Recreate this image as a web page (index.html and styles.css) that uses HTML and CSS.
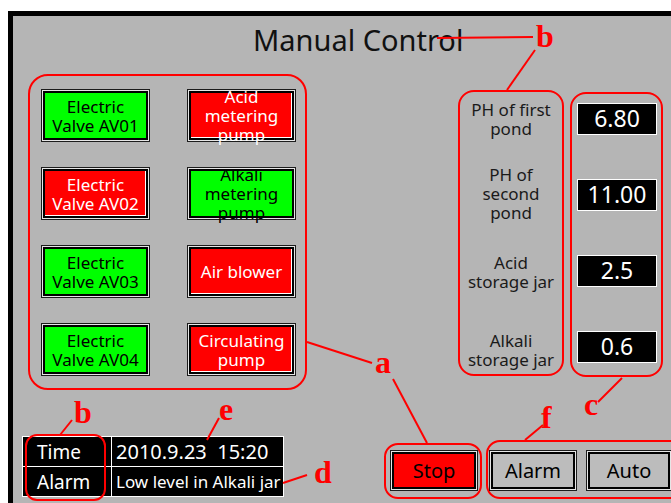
FILE: index.html
```html
<!DOCTYPE html>
<html lang="en">

<head>
    <meta charset="UTF-8">
    <meta name="viewport" content="width=device-width, initial-scale=1.0">
    <title>Manual Control</title>
    <link rel="stylesheet" href="styles.css">
</head>

<body>

    <div class="screen">
        <h1 class="title">Manual Control</h1>

        <div class="main">
            <div class="group-a">
                <div class="btn on"><div class="face">Electric<br>Valve AV01</div></div>
                <div class="btn off"><div class="face">Acid<br>metering<br>pump</div></div>
                <div class="btn off"><div class="face">Electric<br>Valve AV02</div></div>
                <div class="btn on"><div class="face">Alkali<br>metering<br>pump</div></div>
                <div class="btn on"><div class="face">Electric<br>Valve AV03</div></div>
                <div class="btn off"><div class="face">Air blower</div></div>
                <div class="btn on"><div class="face">Electric<br>Valve AV04</div></div>
                <div class="btn off"><div class="face">Circulating<br>pump</div></div>
            </div>

            <div class="labels">
                <div class="label first">PH of first<br>pond</div>
                <div class="label second">PH of<br>second<br>pond</div>
                <div class="label third">Acid<br>storage jar</div>
                <div class="label fourth">Alkali<br>storage jar</div>
            </div>

            <div class="values">
                <div class="value">6.80</div>
                <div class="value">11.00</div>
                <div class="value">2.5</div>
                <div class="value">0.6</div>
            </div>
        </div>

        <div class="bottom">
            <table class="status">
                <tr>
                    <td class="head">Time</td>
                    <td class="clock">2010.9.23&nbsp;&nbsp;15:20</td>
                </tr>
                <tr>
                    <td class="head">Alarm</td>
                    <td class="msg"><div class="msg-text">Low level in Alkali jar</div></td>
                </tr>
            </table>

            <div class="stop-group">
                <div class="btn small stop"><div class="face">Stop</div></div>
            </div>

            <div class="mode-group">
                <div class="btn small mode"><div class="face">Alarm</div></div>
                <div class="btn small mode auto"><div class="face">Auto</div></div>
            </div>
        </div>
    </div>

    <!-- annotation marks drawn over the screen -->
    <svg class="notes" width="671" height="503" viewBox="0 0 671 503">
        <g stroke="#ff0000" stroke-width="2" fill="none">
            <line x1="437" y1="38" x2="533" y2="37" />
            <line x1="535" y1="50" x2="507" y2="90" />
            <line x1="307" y1="342" x2="372" y2="363" />
            <line x1="393" y1="379" x2="427" y2="443" />
            <line x1="72" y1="420" x2="60" y2="435" />
            <line x1="219" y1="418" x2="207" y2="440" />
            <line x1="307" y1="475" x2="283" y2="483" />
            <line x1="543" y1="425" x2="525" y2="440" />
            <line x1="598" y1="402" x2="622" y2="378" />
            <rect x="26" y="435" width="79" height="65" rx="11" />
        </g>
        <g class="marks">
            <text x="536" y="47">b</text>
            <text x="375" y="373">a</text>
            <text x="74" y="423">b</text>
            <text x="219" y="420">e</text>
            <text x="314" y="483">d</text>
            <text x="541" y="428">f</text>
            <text x="584" y="415">c</text>
        </g>
    </svg>

</body>

</html>
```

FILE: styles.css
```css
body {
    margin: 0;
    height: 100vh;
    overflow: hidden;
    position: relative;
    background-color: #ffffff;
    font-family: "Noto Sans", "DejaVu Sans", sans-serif;
}

.screen {
    margin: 11px 0 0 8px;
    height: calc(100vh - 11px);
    border-top: 5px solid #000;
    border-left: 5px solid #000;
    background-color: #b5b5b5;
    overflow: hidden;
}

.title {
    margin: 0;
    padding: 7px 0 17px 240px;
    font-size: 29px;
    font-weight: normal;
    line-height: 34px;
    color: #111;
}

.main {
    display: flex;
    align-items: flex-start;
}

.group-a {
    margin-left: 15px;
    width: 279px;
    height: 316px;
    box-sizing: border-box;
    padding: 13px 0 0 11px;
    border: 2px solid #ff0000;
    border-radius: 20px;
    display: grid;
    grid-template-columns: 109px 109px;
    grid-auto-rows: 53px;
    column-gap: 37px;
    row-gap: 25px;
}

.btn {
    box-sizing: border-box;
    width: 109px;
    height: 53px;
    border: 1px solid #1c1c1c;
    padding: 1px;
    background: #e6e6e6;
}

.btn .face {
    box-sizing: border-box;
    height: 100%;
    border: 2px solid #000;
    display: flex;
    align-items: center;
    justify-content: center;
    text-align: center;
    font-size: 17px;
    line-height: 19px;
    white-space: nowrap;
}

.btn.on .face {
    background: #00ff00;
    color: #000;
}

.btn.off .face {
    background: #ff0000;
    color: #fff;
    box-shadow: inset -1px -1px 0 #fff;
}

.labels {
    margin: 16px 0 0 151px;
    width: 106px;
    height: 286px;
    box-sizing: border-box;
    padding-top: 8px;
    border: 2px solid #ff0000;
    border-radius: 16px;
    display: flex;
    flex-direction: column;
}

.label {
    text-align: center;
    font-size: 17px;
    line-height: 19px;
    color: #1a1a1a;
}

.label.second {
    margin-top: 27px;
}

.label.third {
    margin-top: 31px;
}

.label.fourth {
    margin-top: 40px;
}

.values {
    margin: 18px 0 0 6px;
    width: 93px;
    height: 285px;
    box-sizing: border-box;
    padding: 9px 0 0 5px;
    border: 2px solid #ff0000;
    border-radius: 16px;
    display: flex;
    flex-direction: column;
    gap: 44px;
}

.value {
    box-sizing: border-box;
    width: 80px;
    height: 32px;
    border: 1px solid #fff;
    background: #000;
    color: #fff;
    text-align: center;
    font-size: 23px;
    line-height: 29px;
}

.bottom {
    margin-top: 46px;
    display: flex;
    align-items: flex-start;
}

.bottom > * {
    flex-shrink: 0;
}

.status {
    margin-left: 9px;
    border-collapse: collapse;
    background: #000;
    color: #fff;
}

.status td {
    border: 1px solid #fff;
    height: 29px;
    padding: 0;
    white-space: nowrap;
}

.status .head {
    width: 74px;
    padding-left: 14px;
    font-size: 19px;
}

.status .clock {
    width: 167px;
    padding-left: 4px;
    font-size: 20px;
}

.msg-text {
    width: 167px;
    padding-left: 4px;
    overflow: hidden;
    font-size: 17px;
}

.stop-group {
    margin: 7px 0 0 100px;
    width: 98px;
    height: 56px;
    box-sizing: border-box;
    padding: 5px 0 0 4px;
    border: 2px solid #ff0000;
    border-radius: 14px;
}

.mode-group {
    margin: 4px 0 0 4px;
    width: 200px;
    height: 59px;
    box-sizing: border-box;
    padding: 8px 0 0 1px;
    border: 2px solid #ff0000;
    border-radius: 14px;
    display: flex;
    gap: 9px;
}

.btn.small {
    width: 88px;
    height: 41px;
}

.btn.small .face {
    font-size: 20px;
    color: #000;
}

.btn.stop .face {
    background: #ff0000;
}

.btn.mode .face {
    background: #bcbcbc;
}

.btn.auto {
    width: 86px;
}

.notes {
    position: absolute;
    top: 0;
    left: 0;
    pointer-events: none;
}

.marks {
    fill: #ff0000;
    font-family: "Liberation Serif", serif;
    font-weight: bold;
    font-size: 32px;
}
```
